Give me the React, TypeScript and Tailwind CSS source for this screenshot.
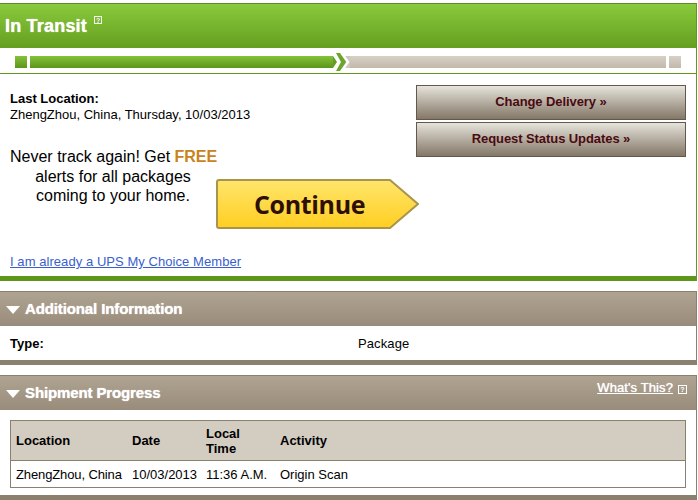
const font = { fontFamily: '"Liberation Sans", Arial, sans-serif' };

const HelpIcon = ({ className }: { className: string }) => (
  <span
    className={`inline-flex items-center justify-center border border-white text-[7px] leading-none text-white font-bold ${className}`}
  >
    ?
  </span>
);

const SectionHeader = ({ title, children }: { title: string; children?: React.ReactNode }) => (
  <div className="flex h-[35px] justify-between border-t border-[#8b7f70] bg-gradient-to-b from-[#afa391] to-[#998c7b] pr-[9px]">
    <div className="flex items-center pt-[1px] pl-[6px]">
      <svg width="14" height="8" viewBox="0 0 14 8" className="mr-[5px]">
        <path d="M0 0 H14 L7 8 Z" fill="#fff" />
      </svg>
      <span className="text-[15px] font-bold tracking-[-0.12px] text-white [text-shadow:0_0_1px_#fff]">{title}</span>
    </div>
    {children}
  </div>
);

export default function App() {
  return (
    <div className="h-[500px] w-[698px] overflow-hidden bg-white pt-[3px] text-[13px] text-black" style={font}>
      {/* status panel */}
      <div className="mr-[1px] border-r border-[#5f981d]">
        <div className="flex h-[45px] items-start border-t border-[#5f8a2a] bg-gradient-to-b from-[#8aca3c] to-[#659f1f] pl-[5px]">
          <span className="mt-[10px] text-[18px] font-bold leading-[24px] tracking-[0.2px] text-white [text-shadow:0_0_1px_#fff]">
            In Transit
          </span>
          <HelpIcon className="ml-[7px] mt-[12px] h-[8px] w-[8px] opacity-90" />
        </div>

        <div className="flex h-[26px] items-start border-b border-[#5f981d] pl-[15px] pt-[8px]">
          <div className="h-[12px] w-[12px] bg-gradient-to-b from-[#84c23a] to-[#5d9619]" />
          <div className="ml-[3px] h-[12px] w-[303px] bg-gradient-to-b from-[#84c23a] to-[#5d9619]" />
          <svg width="17" height="18" viewBox="0 0 17 18" className="-mt-[3px] shrink-0">
            <rect x="8" y="3" width="9" height="12" fill="#cfc8bc" />
            <path d="M7 0 H10 L16.5 9 L10 18 H7 L13.5 9 Z" fill="#fff" />
            <path d="M0 3 L4 9 L0 15 Z" fill="#659f1f" />
            <path d="M3 0 H7 L13 9 L7 18 H3 L8 9 Z" fill="#6ba52b" />
          </svg>
          <div className="h-[12px] w-[316px] bg-gradient-to-b from-[#d7d0c5] to-[#c2b9ac]" />
          <div className="ml-[3px] h-[12px] w-[12px] bg-gradient-to-b from-[#d7d0c5] to-[#c2b9ac]" />
        </div>

        <div className="flex h-[207px] border-b-[5px] border-[#5d9618] pl-[10px]">
          <div className="flex w-[408px] shrink-0 flex-col">
            <div className="mt-[17px] font-bold leading-[16px]">Last Location:</div>
            <div className="leading-[16px]">ZhengZhou, China, Thursday, 10/03/2013</div>
            <div className="mt-[24px] flex">
              <div className="w-[206px] shrink-0 whitespace-nowrap text-center text-[16px] leading-[19.5px]">
                Never track again! Get <span className="font-bold text-[#c9831b]">FREE</span>
                <br />
                alerts for all packages
                <br />
                coming to your home.
              </div>
              <div className="relative mt-[32px] flex h-[50px] w-[203px] shrink-0 items-center">
                <svg width="203" height="50" viewBox="0 0 203 50" className="absolute inset-0">
                  <defs>
                    <linearGradient id="cont" x1="0" y1="0" x2="0" y2="1">
                      <stop offset="0" stopColor="#ffe56c" />
                      <stop offset="1" stopColor="#ffcf21" />
                    </linearGradient>
                  </defs>
                  <path
                    d="M3 1 H174 L202 25 L174 49 H3 Q1 49 1 47 V3 Q1 1 3 1 Z"
                    fill="url(#cont)"
                    stroke="#a8944c"
                    strokeWidth="2"
                    strokeLinejoin="round"
                  />
                </svg>
                <span
                  className="relative ml-[38px] text-[25px] font-bold leading-none tracking-[-0.35px] text-[#2e0f05]"
                  style={{ fontFamily: '"Open Sans", sans-serif' }}
                >
                  Continue
                </span>
              </div>
            </div>
            <a className="mt-[25px] leading-[16px] tracking-[0.06px] text-[#3a5fcd] underline">
              I am already a UPS My Choice Member
            </a>
          </div>
          <div className="-ml-[2px] mt-[11px] flex w-[270px] flex-col gap-[2px]">
            <button className="h-[35px] border border-[#65584a] bg-gradient-to-b from-[#e6e4dc] to-[#847868] pb-[2px] font-bold tracking-[-0.08px] text-[#4a0a10]">
              Change Delivery »
            </button>
            <button className="h-[35px] border border-[#65584a] bg-gradient-to-b from-[#e6e4dc] to-[#847868] pb-[2px] font-bold tracking-[-0.08px] text-[#4a0a10]">
              Request Status Updates »
            </button>
          </div>
        </div>
      </div>

      {/* additional information */}
      <div className="mr-[1px] mt-[10px] border-r border-[#8b7f70]">
        <SectionHeader title="Additional Information" />
        <div className="flex h-[34px] items-center pl-[10px] pt-[1px]">
          <span className="w-[348px] font-bold">Type:</span>
          <span className="tracking-[0.1px]">Package</span>
        </div>
        <div className="h-[5px] bg-[#8b7f70]" />
      </div>

      {/* shipment progress */}
      <div className="mr-[1px] mt-[10px] border-r border-[#8b7f70]">
        <SectionHeader title="Shipment Progress">
          <div className="flex items-start pt-[4px]">
            <a className="text-[13px] leading-[16px] tracking-[0.1px] text-white underline [text-shadow:0_0_1px_#fff]">
              What's This?
            </a>
            <HelpIcon className="ml-[5px] mt-[5px] h-[9px] w-[9px]" />
          </div>
        </SectionHeader>
        <div className="h-[85px] pl-[10px] pt-[10px]">
          <div className="mr-[10px] border border-[#8b7f70]">
            <div className="flex h-[40px] items-center border-b border-[#8b7f70] bg-[#d3ccc0] pl-[5px] font-bold leading-[15px]">
              <span className="w-[116px]">Location</span>
              <span className="w-[74px]">Date</span>
              <span className="w-[74px]">
                Local
                <br />
                Time
              </span>
              <span>Activity</span>
            </div>
            <div className="flex h-[26px] items-center pl-[5px] pt-[1px]">
              <span className="w-[116px] tracking-[-0.12px]">ZhengZhou, China</span>
              <span className="w-[74px]">10/03/2013</span>
              <span className="w-[74px]">11:36 A.M.</span>
              <span>Origin Scan</span>
            </div>
          </div>
        </div>
        <div className="h-[5px] bg-[#8b7f70]" />
      </div>
    </div>
  );
}
